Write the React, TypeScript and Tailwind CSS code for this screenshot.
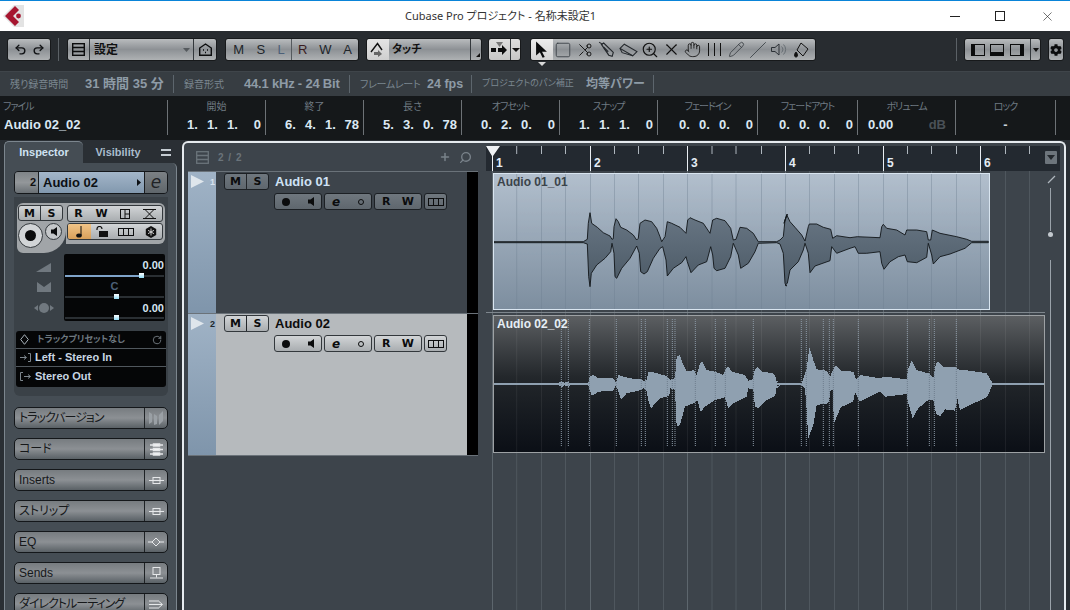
import type { ReactNode } from 'react';
import {
  Hand, Pencil, RotateCcw, Scissors, Search, Slash, Square, Undo2, Redo2, X, ZoomIn, Plus,
} from 'lucide-react';
import { FaCog } from 'react-icons/fa';

const FONT = "font-['Liberation_Sans','Noto_Sans_CJK_JP',sans-serif] [font-feature-settings:'palt']";
const BTN = 'bg-gradient-to-b from-[#b9bcbe] via-[#8d9195] to-[#aeb1b3] border border-[#17191b] rounded-[3px]';
const SMALL = 'bg-gradient-to-b from-[#6f777e] to-[#5f676e] border border-[#1c2024] rounded-[3px]';
const SMALL_LIGHT = 'bg-gradient-to-b from-[#d2d5d7] to-[#a9adb0] border border-[#33383c] rounded-[3px]';

type Pt = [number, number];

// traced envelopes of the two clips, in zoomed crop coordinates
const w1Top: Pt[] = [[12,305],[280,305],[292,298],[295,250],[300,218],[305,250],[322,262],[340,278],[360,288],[366,298],[370,296],[372,260],[378,236],[385,245],[392,262],[410,270],[430,285],[440,300],[445,295],[450,250],[465,240],[485,245],[500,265],[510,290],[515,305],[525,290],[532,245],[545,250],[570,262],[588,280],[593,240],[600,233],[615,240],[640,250],[660,280],[668,240],[680,235],[705,242],[722,265],[730,300],[738,298],[750,262],[770,265],[790,280],[805,305],[860,305],[870,300],[880,290],[885,240],[892,222]];
const w1Bot: Pt[] = [[12,308],[280,308],[292,312],[296,410],[300,440],[304,400],[320,375],[345,355],[362,335],[366,310],[372,340],[375,410],[380,415],[395,385],[420,355],[440,318],[448,340],[452,395],[462,402],[472,395],[490,355],[510,325],[518,320],[528,360],[532,408],[550,385],[575,368],[588,350],[592,365],[603,398],[625,375],[650,365],[662,320],[668,345],[672,385],[680,392],[705,385],[722,350],[730,310],[745,345],[752,385],[775,370],[795,335],[805,310],[860,308],[870,312],[880,340],[885,430],[890,438]];
const w1Top2: Pt[] = [[42,250],[50,224],[60,245],[75,262],[95,285],[105,303],[115,260],[118,252],[140,252],[160,262],[182,268],[188,295],[200,287],[240,293],[262,290],[330,293],[335,260],[340,253],[350,265],[380,270],[405,285],[410,270],[440,270],[470,275],[475,300],[482,300],[487,270],[510,280],[560,290],[590,298],[605,304],[655,304]];
const w1Bot2: Pt[] = [[45,435],[52,430],[60,390],[85,365],[100,330],[105,310],[115,340],[120,398],[135,378],[180,362],[185,320],[200,340],[240,325],[255,320],[265,340],[290,340],[330,335],[335,370],[342,388],[360,365],[385,350],[405,345],[412,365],[440,368],[470,352],[475,310],[485,345],[490,372],[510,350],[540,342],[585,325],[605,308],[655,308]];

const w2Top: Pt[] = [[12,220],[205,219],[215,214],[222,218],[235,216],[242,220],[295,219],[300,200],[310,195],[325,205],[370,205],[378,218],[385,195],[395,198],[420,205],[455,208],[460,213],[470,210],[475,185],[490,187],[530,198],[540,210],[555,205],[560,140],[570,135],[580,165],[590,185],[612,180],[620,195],[630,160],[637,156],[650,180],[675,185],[700,195],[708,175],[715,170],[725,185],[765,195],[775,212],[788,208],[795,178],[803,172],[815,185],[850,190],[860,215],[870,219]];
const w2Bot: Pt[] = [[12,224],[205,225],[215,232],[222,226],[235,230],[242,225],[295,226],[305,258],[325,245],[370,242],[378,226],[385,245],[393,268],[410,250],[455,240],[460,232],[470,245],[475,270],[483,296],[495,280],[510,265],[538,258],[540,235],[555,240],[560,350],[570,345],[585,290],[615,278],[622,270],[632,305],[645,290],[675,270],[705,262],[715,295],[730,280],[770,260],[775,235],[790,238],[795,290],[805,295],[830,270],[855,258],[860,230],[870,225]];
const w2Top2: Pt[] = [[0,190],[15,195],[22,219],[95,219],[100,205],[110,178],[118,112],[130,150],[140,178],[170,182],[180,200],[190,178],[198,165],[212,182],[250,185],[258,208],[270,195],[330,205],[345,200],[410,208],[415,175],[425,152],[440,180],[475,190],[490,205],[498,160],[505,155],[520,172],[555,170],[562,178],[600,182],[650,190],[668,220],[690,220],[825,220]];
const w2Bot2: Pt[] = [[0,262],[15,258],[22,225],[95,225],[105,235],[110,300],[115,385],[130,345],[140,285],[175,280],[182,240],[188,240],[192,340],[212,292],[250,275],[255,245],[270,275],[330,245],[345,260],[410,252],[415,280],[428,325],[445,295],[475,270],[490,270],[498,310],[510,320],[525,298],[555,302],[562,265],[570,300],[600,285],[650,262],[668,225],[690,224],[825,224]];

const toAbs = (pts: Pt[], ox: number, oy: number) => pts.map(([x, y]) => [ox + x / 3, oy + y / 3] as Pt);
const toPath = (top: Pt[], bot: Pt[]) =>
  'M' + [...top, ...[...bot].reverse()].map(([x, y]) => `${x.toFixed(1)} ${y.toFixed(1)}`).join('L') + 'Z';

const wave1 = toPath(
  [...toAbs(w1Top, 490, 140), ...toAbs(w1Top2, 770, 140)],
  [...toAbs(w1Bot, 490, 140), ...toAbs(w1Bot2, 770, 140)],
);
const wave2 = toPath(
  [...toAbs(w2Top, 490, 310), ...toAbs(w2Top2, 770, 310)],
  [...toAbs(w2Bot, 490, 310), ...toAbs(w2Bot2, 770, 310)],
);

const hitpoints = [
  ...[214, 235, 298, 379, 454, 466, 532, 547, 555, 616, 676, 706, 790].map((x) => 490 + x / 3),
  ...[94, 109, 160, 178, 190, 265, 412, 478, 493, 559].map((x) => 770 + x / 3),
];

const barLines = [492, 590, 687, 785, 883, 980];
const beatLines = [516.7, 541.5, 565.5, 614.5, 638.5, 663.5, 712, 736, 761.5, 809.5, 834.5, 858.5, 907.5, 931.5, 956.5, 1005.5, 1029.5];

function GridLines({ bar, beat, opacity = 1 }: { bar: string; beat: string; opacity?: number }) {
  return (
    <g opacity={opacity}>
      {beatLines.map((x) => <line key={x} x1={x} x2={x} y1="0" y2="620" stroke={beat} />)}
      {barLines.map((x) => <line key={x} x1={x + 0.5} x2={x + 0.5} y1="0" y2="620" stroke={bar} />)}
    </g>
  );
}

function InfoCol({ label, w, left, children }: { label: string; w: string; left?: boolean; children: ReactNode }) {
  // katakana labels sit tighter than the kanji ones
  const kana = /^[\u30A0-\u30FF]/.test(label);
  return (
    <div className={`${w} h-[35px] border-r border-[#6d7276] flex flex-col shrink-0`}>
      <div className={`h-[16px] text-[10px] leading-[14px] text-[#6f7a82] ${kana ? 'tracking-[-1px]' : ''} ${left ? 'pl-[3px]' : 'text-center'}`}>{label}</div>
      {children}
    </div>
  );
}

function TimeVal({ v }: { v: [string, string, string, string] }) {
  return (
    <div className="flex justify-end pr-[4px] text-[13px] font-bold leading-[20px] text-[#dbe8f3] whitespace-nowrap">
      <span className="w-[20px]">{v[0]}.</span>
      <span className="w-[20px]">{v[1]}.</span>
      <span className="w-[20px]">{v[2]}.</span>
      <span className="w-[14px] flex justify-end">{v[3]}</span>
    </div>
  );
}

function StatusSep() {
  return <div className="w-px h-[18px] bg-[#5d666d] shrink-0" />;
}

function SectionBtn({ label, icon, tight }: { label: string; icon: ReactNode; tight?: boolean }) {
  return (
    <div className="h-[22px] w-[154px] mb-[9px] flex shrink-0 rounded-[5px] border border-[#14171a] bg-gradient-to-b from-[#777c80] via-[#8c9094] to-[#5a6166]">
      <div className={`flex-1 pl-[4px] text-[12px] leading-[20px] text-[#16181a] whitespace-nowrap ${tight ? 'tracking-[-1px]' : ''}`}>{label}</div>
      <div className="w-[23px] border-l border-[#1e2225] flex items-center justify-center text-[#e6e8ea]">{icon}</div>
    </div>
  );
}

function ToolIcon({ active, children }: { active?: boolean; children: ReactNode }) {
  return (
    <div className={`w-[21.6px] h-full flex items-center justify-center shrink-0 ${active ? 'bg-gradient-to-b from-[#ececec] to-[#d2d2d2] rounded-l-[3px]' : ''}`}>
      {children}
    </div>
  );
}

function Letter({ t, className = 'text-[11px]' }: { t: string; className?: string }) {
  return <span className={`font-bold font-['DejaVu_Sans',sans-serif] ${className} text-[#0b0c0d] leading-none`}>{t}</span>;
}

function LaneIcon() {
  return (
    <svg width="16" height="8" viewBox="0 0 16 8" fill="none" stroke="#0d0e0f" strokeWidth="1">
      <rect x=".5" y=".5" width="15" height="7" /><path d="M5.5 0v8M10.5 0v8" />
    </svg>
  );
}

function TrackRow({ n, name, selected }: { n: string; name: string; selected?: boolean }) {
  const sk = selected ? SMALL_LIGHT : SMALL;
  return (
    <div className="h-[142px] flex border-t border-[#6a7279] shrink-0">
      <div className="w-[28px] bg-gradient-to-b from-[#a0b3c6] to-[#7f95ab] flex items-start pt-[3px] pl-[3px] gap-[6px]">
        <svg width="13" height="13" viewBox="0 0 13 13" className="shrink-0"><path d="M0 0L13 6.5L0 13Z" fill="#dfe6ec" /></svg>
        <span className={`text-[9px] font-bold leading-[14px] ${selected ? 'text-[#22272b]' : 'text-[#d8e3ee]'}`}>{n}</span>
      </div>
      <div className={`w-[251px] pl-[8px] pt-[1px] ${selected ? 'bg-[#b6babd]' : 'bg-[#3d444b]'}`}>
        <div className="flex items-center">
          <div className={`flex w-[45px] h-[17px] ${sk}`}>
            <div className="flex-1 flex items-center justify-center border-r border-[#22262a]"><Letter t="M" /></div>
            <div className="flex-1 flex items-center justify-center"><Letter t="S" /></div>
          </div>
          <span className={`ml-[6px] text-[13px] font-bold leading-[17px] ${selected ? 'text-[#0c0c0c]' : 'text-[#cfe2f5]'}`}>{name}</span>
        </div>
        <div className="flex ml-[50px] mt-[3px] gap-[2px]">
          <div className={`w-[48px] h-[17px] flex items-center justify-between px-[7px] ${sk}`}>
            <span className="w-[8px] h-[8px] rounded-full bg-[#0b0c0d]" />
            <svg width="6" height="9" viewBox="0 0 6 9"><path d="M6 0V9L2.5 6.5H0V2.5H2.5Z" fill="#0b0c0d" /></svg>
          </div>
          <div className={`w-[48px] h-[17px] flex items-center justify-between px-[7px] ${sk}`}>
            <Letter t="e" className="text-[12px] italic" />
            <span className="w-[6px] h-[6px] rounded-full border border-[#0b0c0d]" />
          </div>
          <div className={`w-[48px] h-[17px] flex items-center justify-between px-[7px] ${sk}`}>
            <Letter t="R" /><Letter t="W" />
          </div>
          <div className={`w-[23px] h-[17px] flex items-center justify-center ${sk}`}><LaneIcon /></div>
        </div>
      </div>
      <div className="w-[11px] bg-black" />
    </div>
  );
}

export default function App() {
  return (
    <div className={`w-[1070px] h-[610px] overflow-hidden flex flex-col bg-[#2d3338] ${FONT}`}>
      {/* window title */}
      <div className="h-[31px] shrink-0 bg-white border-t border-[#0a84d8] flex items-center">
        <div className="w-[29px] pl-[3px] shrink-0">
          <svg width="21" height="22" viewBox="0 0 21 22">
            <path d="M11 0H21V22H11L0 11Z" fill="#e3e3e3" />
            <path d="M12 1L2 11L12 21L16 17L10 11L16 5Z" fill="#a6152f" />
            <circle cx="15.5" cy="11" r="2.4" fill="#a6152f" />
          </svg>
        </div>
        <div className="ml-[376px] text-[11px] text-[#333] font-['Noto_Sans','Noto_Sans_CJK_JP',sans-serif] whitespace-nowrap">Cubase Pro プロジェクト - 名称未設定1</div>
        <div className="ml-auto flex items-center mr-[15px] gap-[35px]">
          <div className="w-[10px] h-px bg-[#222]" />
          <div className="w-[10px] h-[10px] border border-[#222]" />
          <X size={15} strokeWidth={1} className="text-[#222]" />
        </div>
      </div>

      {/* toolbar */}
      <div className="h-[41px] shrink-0 bg-[#282c30] border-b border-[#3f454a] flex items-center pl-[7px] pb-[3px]">
        <div className={`w-[44px] h-[23px] ${BTN} flex items-center justify-center gap-[5px] text-[#101214]`}>
          <Undo2 size={13} strokeWidth={2.5} /><Redo2 size={13} strokeWidth={2.5} />
        </div>
        <div className="w-px h-[23px] bg-[#5b6166] ml-[7px] mr-[8px]" />
        <div className={`w-[150px] h-[23px] ${BTN} flex items-center`}>
          <div className="w-[22px] h-full flex items-center justify-center border-r border-[#33383c]">
            <svg width="13" height="13" viewBox="0 0 13 13" fill="none" stroke="#0b0c0d" strokeWidth="1.4"><rect x=".7" y=".7" width="11.6" height="11.6" /><path d="M1 4.5h11M1 8.5h11" /></svg>
          </div>
          <span className="ml-[4px] text-[12px] font-bold text-[#111] flex-1">設定</span>
          <svg width="7" height="4" viewBox="0 0 7 4" className="mr-[3px]"><path d="M0 0H7L3.5 4Z" fill="#555a5e" /></svg>
          <div className="w-[23px] h-full border-l border-[#33383c] flex items-center justify-center">
            <svg width="13" height="13" viewBox="0 0 13 13" fill="none" stroke="#0b0c0d" strokeWidth="1.4"><path d="M.7 12.3V5L6.5 1L12.3 5V12.3Z" /><path d="M4 7h1M8 7h1M6 9.5h1" /></svg>
          </div>
        </div>
        <div className={`ml-[8px] w-[134px] h-[23px] ${BTN} flex items-center text-[13px] text-[#20252a]`}>
          <div className="w-[66px] h-full flex items-center justify-around border-r border-[#555a5e] pl-[1px]">
            <span>M</span><span>S</span><span className="text-[#4c6078]">L</span>
          </div>
          <div className="flex-1 flex items-center justify-around">
            <span className="text-[#3a1c22]">R</span><span>W</span><span>A</span>
          </div>
        </div>
        <div className={`ml-[7px] w-[116px] h-[23px] ${BTN} flex items-center`}>
          <div className="w-[22px] h-full bg-gradient-to-b from-[#e4e4e4] to-[#cfcfcf] rounded-l-[3px] flex items-center justify-center">
            <svg width="16" height="15" viewBox="0 0 16 15" fill="none"><path d="M1 10L7.5 1.5L12 8" stroke="#111" strokeWidth="1.4" /><path d="M8 8L12 12L8 15V13H4V10H8Z" fill="#666" /></svg>
          </div>
          <span className="ml-[3px] text-[11px] font-bold text-[#111] flex-1">タッチ</span>
          <div className="w-[11px] h-full border-l border-[#33383c] relative">
            <span className="absolute right-[1px] bottom-[3px] w-0 h-0 border-l-[4px] border-l-transparent border-b-[4px] border-b-[#111]" />
          </div>
        </div>
        <div className="ml-[6px] w-[33px] h-[23px] flex rounded-[3px] border border-[#17191b] bg-gradient-to-b from-[#dedede] to-[#c6c6c6]">
          <div className="w-[22px] flex items-center justify-center border-r border-[#33383c]">
            <svg width="17" height="15" viewBox="0 0 17 15"><path d="M0 6h5v4H0ZM7 6h4V3l5 5-5 5v-3H7Z" fill="#0b0c0d" /><path d="M5 0h7L8.500 5Z" fill="#777" /></svg>
          </div>
          <div className="flex-1 flex items-center justify-center">
            <span className="w-0 h-0 border-x-[4px] border-x-transparent border-t-[4px] border-t-[#111]" />
          </div>
        </div>
        <div className={`ml-[9px] w-[286px] h-[23px] ${BTN} flex items-center relative text-[#20252a]`}>
          <ToolIcon active>
            <svg width="13" height="17" viewBox="0 0 12 15"><path d="M1 0L11 9.500H6.500L9 14.500L7 15L4.500 10L1 13Z" fill="#0b0c0d" /></svg>
          </ToolIcon>
          <ToolIcon><Square size={18} strokeWidth={1.2} className="text-[#3c4247]" /></ToolIcon>
          <ToolIcon><Scissors size={16} strokeWidth={1.4} className="text-[#111] -scale-x-100" /></ToolIcon>
          <ToolIcon>
            <svg width="17" height="17" viewBox="0 0 15 15" fill="none" stroke="#24282c" strokeWidth="1"><path d="M1 1L4 3" /><path d="M3 3L5 1.800L13.500 10L12.500 13.500L9.500 12.500Z" /><path d="M5 5.500L9 9.500" /></svg>
          </ToolIcon>
          <ToolIcon>
            <svg width="19" height="14" viewBox="0 0 18 13" fill="none" stroke="#24282c" strokeWidth="1"><path d="M1 5L5 1L17 8L13 12Z" /><path d="M1 5L3 9L13 12" /></svg>
          </ToolIcon>
          <ToolIcon><ZoomIn size={18} strokeWidth={1.5} className="text-[#111]" /></ToolIcon>
          <ToolIcon><X size={19} strokeWidth={1.4} className="text-[#111]" /></ToolIcon>
          <ToolIcon><Hand size={17} strokeWidth={1.2} className="text-[#111]" /></ToolIcon>
          <ToolIcon>
            <svg width="15" height="13" viewBox="0 0 15 13" stroke="#111" strokeWidth="1"><path d="M1.500 0v13M7.500 0v13M13.500 0v13" /></svg>
          </ToolIcon>
          <ToolIcon><Pencil size={17} strokeWidth={1.1} className="text-[#30353a]" /></ToolIcon>
          <ToolIcon><Slash size={18} strokeWidth={1.2} className="text-[#40464b]" /></ToolIcon>
          <ToolIcon>
            <svg width="16" height="13" viewBox="0 0 16 13" fill="none" stroke="#2c3136"><path d="M.5 4.500H4L8 1V12L4 8.500H.5Z" /><path d="M10.500 3.500a4 4 0 0 1 0 6M12.500 1.500a7 7 0 0 1 0 10" stroke="#666d73" /></svg>
          </ToolIcon>
          <ToolIcon>
            <svg width="16" height="16" viewBox="0 0 16 16" fill="none" stroke="#111"><path d="M8 1L15 7L10 14L4 8Z" /><path d="M3 10C1 12 1 15 3 15S5 12 3 10Z" fill="#111" /></svg>
          </ToolIcon>
          <span className="absolute left-[7px] -bottom-[6px] w-0 h-0 border-x-[4px] border-x-transparent border-t-[4px] border-t-[#d8d8d8]" />
        </div>
        <div className="w-px h-[23px] bg-[#5b6166] ml-[140px]" />
        <div className={`ml-[7px] w-[77px] h-[23px] ${BTN} flex items-center`}>
          <div className="w-[66px] flex items-center justify-around border-r border-[#33383c] h-full px-[3px]">
            <div className="w-[14px] h-[12px] border border-[#0b0c0d] flex"><span className="w-[3px] bg-[#0b0c0d]" /></div>
            <div className="w-[14px] h-[12px] border border-[#0b0c0d] flex items-end"><span className="w-full h-[3px] bg-[#0b0c0d]" /></div>
            <div className="w-[14px] h-[12px] border border-[#0b0c0d] flex justify-end"><span className="w-[3px] bg-[#0b0c0d]" /></div>
          </div>
          <div className="flex-1 flex items-center justify-center">
            <span className="w-0 h-0 border-x-[3.5px] border-x-transparent border-t-[4px] border-t-[#111]" />
          </div>
        </div>
        <div className={`ml-[7px] w-[16px] h-[23px] ${BTN} flex items-center justify-center`}>
          <FaCog size={12} className="text-[#0b0c0d]" />
        </div>
      </div>

      {/* status line */}
      <div className="h-[24px] shrink-0 bg-[#373d42] flex items-center pl-[10px] whitespace-nowrap text-[#7b8790]">
        <span className="w-[75px] text-[10px]">残り録音時間</span>
        <span className="w-[88px] text-[13px] font-bold text-[#8e9ba6]">31 時間 35 分</span>
        <StatusSep />
        <span className="ml-[10px] w-[60px] text-[10px]">録音形式</span>
        <span className="w-[105px] text-[13px] font-bold text-[#8e9ba6] tracking-[-0.2px]">44.1 kHz - 24 Bit</span>
        <StatusSep />
        <span className="ml-[10px] w-[67px] text-[10px] tracking-[-0.3px]">フレームレート</span>
        <span className="w-[44px] text-[12.5px] font-bold text-[#8e9ba6]">24 fps</span>
        <StatusSep />
        <span className="ml-[10px] w-[104px] text-[9px]">プロジェクトのパン補正</span>
        <span className="w-[67px] text-[12px] font-bold text-[#8e9ba6]">均等パワー</span>
        <StatusSep />
      </div>

      {/* info line */}
      <div className="h-[44px] shrink-0 bg-[#15181a] flex items-start pt-[4px]">
        <InfoCol label="ファイル" left w="w-[168px]">
          <div className="pl-[4px] text-[13px] font-bold leading-[20px] text-[#dbe8f3]">Audio 02_02</div>
        </InfoCol>
        <InfoCol label="開始" w="w-[98px]"><TimeVal v={['1', '1', '1', '0']} /></InfoCol>
        <InfoCol label="終了" w="w-[98px]"><TimeVal v={['6', '4', '1', '78']} /></InfoCol>
        <InfoCol label="長さ" w="w-[98px]"><TimeVal v={['5', '3', '0', '78']} /></InfoCol>
        <InfoCol label="オフセット" w="w-[98px]"><TimeVal v={['0', '2', '0', '0']} /></InfoCol>
        <InfoCol label="スナップ" w="w-[98px]"><TimeVal v={['1', '1', '1', '0']} /></InfoCol>
        <InfoCol label="フェードイン" w="w-[100px]"><TimeVal v={['0', '0', '0', '0']} /></InfoCol>
        <InfoCol label="フェードアウト" w="w-[100px]"><TimeVal v={['0', '0', '0', '0']} /></InfoCol>
        <InfoCol label="ボリューム" w="w-[98px]">
          <div className="flex justify-between pl-[10px] pr-[9px] text-[13px] font-bold leading-[20px]">
            <span className="text-[#dbe8f3]">0.00</span><span className="text-[#4a5157]">dB</span>
          </div>
        </InfoCol>
        <InfoCol label="ロック" w="w-[100px]">
          <div className="text-center text-[13px] font-bold leading-[20px] text-[#c8d2da]">-</div>
        </InfoCol>
      </div>

      {/* main */}
      <div className="flex-1 flex min-h-0 bg-[#2a2f34]">
        {/* inspector */}
        <div className="w-[182px] shrink-0 pl-[4px] pt-[1px] flex flex-col">
          <div className="h-[22px] flex items-center shrink-0">
            <div className="w-[79px] h-full bg-[#454d54] border-t border-l border-[#7c868e] rounded-t-[5px] text-center text-[11px] font-bold leading-[21px] text-[#cfe2f2]">Inspector</div>
            <div className="w-[70px] text-center text-[11px] font-bold text-[#a9bccc]">Visibility</div>
            <div className="ml-[8px] w-[10px] h-[7px] border-y-2 border-[#c5ccd2]" />
          </div>
          <div className="w-[173px] flex-1 bg-[#454d54] border-x border-[#7c868e] rounded-tr-[5px] pt-[8px] pl-[9px] flex flex-col">
            <div className="w-[154px] h-[23px] flex shrink-0 rounded-[4px] border border-[#14171a] overflow-hidden">
              <div className="w-[23px] bg-gradient-to-b from-[#7f8488] via-[#93979a] to-[#6a7075] text-right pr-[2px] text-[11px] font-bold leading-[21px] text-[#111]">2</div>
              <div className="flex-1 bg-gradient-to-b from-[#a3b6c9] to-[#8298ae] border-x border-[#1a1d20] flex items-center pl-[4px] text-[13px] font-bold text-[#0c1014]">
                Audio 02
                <svg width="4" height="7" viewBox="0 0 4 7" className="ml-auto mr-[3px]"><path d="M0 0L4 3.500L0 7Z" fill="#0c1014" /></svg>
              </div>
              <div className="w-[22px] bg-gradient-to-b from-[#7c8185] to-[#5f666b] flex items-center justify-center text-[17px] italic text-[#1f2326] font-['DejaVu_Sans',sans-serif]">e</div>
            </div>
            <div className="w-[154px] h-[199px] mt-[3px] bg-[#3a4147] rounded-b-[6px] flex flex-col items-center pt-[6px] shrink-0">
              <div className="flex items-start w-[148px]">
                <div className="w-[49px] h-[50px] bg-[#a1a5a8] rounded-l-[6px] rounded-br-[22px] pl-[1px] pt-[2px] flex flex-col gap-[2px]">
                  <div className={`flex w-[45px] h-[16px] ${SMALL_LIGHT}`}>
                    <div className="flex-1 flex items-center justify-center border-r border-[#33383c]"><Letter t="M" /></div>
                    <div className="flex-1 flex items-center justify-center"><Letter t="S" /></div>
                  </div>
                  <div className="flex items-start gap-[2px]">
                    <div className="w-[25px] h-[25px] rounded-full bg-[#d2d5d7] border border-[#33383c] flex items-center justify-center shrink-0">
                      <span className="w-[11px] h-[11px] rounded-full bg-[#0b0c0d]" />
                    </div>
                    <div className="w-[17px] h-[17px] rounded-full bg-[#c4c7c9] border border-[#33383c] flex items-center justify-center shrink-0">
                      <svg width="6" height="9" viewBox="0 0 6 9"><path d="M6 0V9L2.500 6.500H0V2.500H2.500Z" fill="#0b0c0d" /></svg>
                    </div>
                  </div>
                </div>
                <div className="w-[99px] h-[41px] bg-[#a1a5a8] rounded-r-[6px] pt-[2px] pl-[1px] flex flex-col gap-[1px]">
                  <div className={`w-[96px] h-[17px] flex items-center justify-around ${SMALL_LIGHT}`}>
                    <Letter t="R" /><Letter t="W" />
                    <svg width="10" height="10" viewBox="0 0 10 10" fill="none" stroke="#111"><rect x=".5" y=".5" width="9" height="9" /><path d="M5 0v10M5 5h5" /></svg>
                    <svg width="13" height="10" viewBox="0 0 13 10" fill="none" stroke="#111"><path d="M0 .5h13M0 9.500h13M2 .5L11 9.500M11 .5L2 9.500" /></svg>
                  </div>
                  <div className={`w-[96px] h-[17px] flex ${SMALL_LIGHT}`}>
                    <div className="w-[23px] h-full bg-gradient-to-b from-[#f0c487] to-[#d9a05a] rounded-l-[2px] flex items-center justify-center">
                      <svg width="7" height="12" viewBox="0 0 7 12"><path d="M5 0V9" stroke="#111" /><ellipse cx="3" cy="9.500" rx="2.800" ry="2" fill="#111" /></svg>
                    </div>
                    <div className="flex-1 flex items-center justify-around">
                      <svg width="12" height="11" viewBox="0 0 12 11" fill="none"><path d="M1 4V3a2.500 2.500 0 0 1 5 0" stroke="#111" strokeWidth="1.200" /><rect x="3" y="5" width="9" height="6" fill="#111" /></svg>
                      <LaneIcon />
                      <svg width="12" height="12" viewBox="0 0 12 12"><path d="M6 0L11.200 3V9L6 12L.8 9V3Z" fill="#111" /><path d="M6 2.500V9.500M3 4.300L9 7.700M9 4.300L3 7.700" stroke="#ddd" strokeWidth=".9" /></svg>
                    </div>
                  </div>
                </div>
              </div>
              <div className="w-[148px] flex mt-[1px]">
                <div className="w-[47px] flex flex-col items-center pl-[6px] pt-[5px] shrink-0">
                  <svg width="15" height="13" viewBox="0 0 15 13"><path d="M0 13L15 4V13Z" fill="#70787f" /></svg>
                  <svg width="14" height="11" viewBox="0 0 14 11" className="mt-[9px]"><path d="M0 1L7 6L14 1V11H0Z" fill="#70787f" /></svg>
                  <div className="flex items-center gap-[1px] mt-[11px]">
                    <span className="w-0 h-0 border-y-[3.500px] border-y-transparent border-r-[4px] border-r-[#70787f]" />
                    <span className="w-[10px] h-[10px] rounded-full bg-[#70787f]" />
                    <span className="w-0 h-0 border-y-[3.500px] border-y-transparent border-l-[4px] border-l-[#70787f]" />
                  </div>
                </div>
                <div className="w-[101px] h-[67px] bg-[#050607] rounded-[2px] px-[1px] pt-[4px] text-[11px] font-bold leading-[14px] text-[#d6e5f2]">
                  <div className="text-right">0.00</div>
                  <div className="h-[2px] mt-[3px] bg-[#2a2f33] relative">
                    <div className="h-full w-[76px] bg-[#7fa3c9]" />
                    <span className="absolute left-[74px] -top-[2px] w-[5px] h-[5px] bg-gradient-to-b from-white to-[#8fdcf5]" />
                  </div>
                  <div className="text-center text-[#4c6078] mt-[2px]">C</div>
                  <div className="h-[2px] mt-[3px] bg-[#2a2f33] relative">
                    <span className="absolute left-[49px] -top-[2px] w-[5px] h-[5px] bg-gradient-to-b from-white to-[#8fdcf5]" />
                  </div>
                  <div className="text-right mt-[3px]">0.00</div>
                  <div className="h-[2px] mt-[2px] bg-[#2a2f33] relative">
                    <span className="absolute left-[49px] -top-[2px] w-[5px] h-[5px] bg-gradient-to-b from-white to-[#8fdcf5]" />
                  </div>
                </div>
              </div>
              <div className="w-[150px] h-[56px] mt-[10px] bg-[#050607] rounded-[3px] text-[11px] font-bold text-[#c8d6e2] flex flex-col shrink-0">
                <div className="h-[18px] flex items-center px-[4px] border-b border-[#50575d] text-[#6d7880]">
                  <svg width="9" height="11" viewBox="0 0 9 11" fill="none" stroke="#a8b2ba"><path d="M4.500 .7L8.300 5.500L4.500 10.300L.7 5.500Z" /></svg>
                  <span className="ml-[8px] text-[9px] flex-1">トラックプリセットなし</span>
                  <RotateCcw size={10} className="text-[#7d868d] -scale-x-100" />
                </div>
                <div className="h-[18px] flex items-center px-[4px] border-b border-[#50575d]">
                  <svg width="11" height="9" viewBox="0 0 11 9" fill="none" stroke="#7d868d"><path d="M0 4.500H6M4 2.500L6.500 4.500L4 6.500M8 .5H10.500V8.500H8" /></svg>
                  <span className="ml-[4px]">Left - Stereo In</span>
                </div>
                <div className="h-[18px] flex items-center px-[4px]">
                  <svg width="11" height="9" viewBox="0 0 11 9" fill="none" stroke="#7d868d"><path d="M3 .5H.5V8.500H3M4 4.500H10M8 2.500L10.500 4.500L8 6.500" /></svg>
                  <span className="ml-[4px]">Stereo Out</span>
                </div>
              </div>
            </div>
            <div className="mt-[11px] flex flex-col">
              <SectionBtn tight label="トラックバージョン" icon={<svg width="14" height="14" viewBox="0 0 14 14" fill="#9aa0a5"><path d="M0 1L3 3V11L0 13ZM5 3L8 5V13L5 14ZM14 0V10L10 14V4Z" /></svg>} />
              <SectionBtn label="コード" icon={<svg width="13" height="13" viewBox="0 0 13 13" stroke="currentColor" strokeWidth="1.500"><path d="M0 2h13M0 6.500h13M0 11h13" /><rect x="3.500" y="1" width="6" height="2" fill="white" /><rect x="3.500" y="5.500" width="6" height="2" fill="white" /><rect x="3.500" y="10" width="6" height="2" fill="white" /></svg>} />
              <SectionBtn label="Inserts" icon={<svg width="15" height="9" viewBox="0 0 15 9" fill="none" stroke="currentColor"><path d="M0 4.500H15" /><rect x="4" y="1.500" width="7" height="6" /></svg>} />
              <SectionBtn label="ストリップ" icon={<svg width="15" height="9" viewBox="0 0 15 9" fill="none" stroke="currentColor"><path d="M0 4.500H15" /><rect x="4" y="1.500" width="7" height="6" /></svg>} />
              <SectionBtn label="EQ" icon={<svg width="16" height="10" viewBox="0 0 16 10" fill="none" stroke="currentColor"><path d="M0 5H4L8 1L12 5H16M4 5L8 9L12 5" /></svg>} />
              <SectionBtn label="Sends" icon={<svg width="13" height="12" viewBox="0 0 13 12" fill="none" stroke="currentColor"><rect x="3" y=".5" width="7" height="7" /><path d="M6.500 7.500V10.500M0 11H13" /></svg>} />
              <SectionBtn tight label="ダイレクトルーティング" icon={<svg width="14" height="9" viewBox="0 0 14 9" fill="none" stroke="currentColor"><path d="M0 1H10M0 4.500H13M0 8H10M10 1.500L13.500 4.500L10 7.500" /></svg>} />
            </div>
          </div>
        </div>

        {/* project area */}
        <div className="w-[884px] h-[480px] mt-[1px] shrink-0 border-x-2 border-t-2 border-[#e6ebef] rounded-t-[6px] bg-[#3d444b] flex pl-[4px] overflow-hidden">
          {/* track list */}
          <div className="w-[290px] shrink-0 flex flex-col">
            <div className="h-[28px] flex items-center pl-[8px] pr-[6px] shrink-0">
              <svg width="13" height="13" viewBox="0 0 13 13" fill="none" stroke="#6b747b" strokeWidth="1.300"><rect x=".7" y=".7" width="11.600" height="11.600" /><path d="M1 4.500h11M1 8.500h11" /></svg>
              <span className="ml-[9px] text-[10px] font-bold text-[#6b747b] tracking-[1px]">2 / 2</span>
              <Plus size={12} strokeWidth={3} className="ml-auto text-[#79828a]" />
              <Search size={13} strokeWidth={2.500} className="ml-[8px] text-[#79828a] -scale-x-100" />
            </div>
            <TrackRow n="1" name="Audio 01" />
            <TrackRow n="2" name="Audio 02" selected />
            <div className="flex-1 border-t border-[#6a7279]" />
          </div>

          {/* event display */}
          <div className="ml-[8px] w-[579px] shrink-0 flex flex-col">
            <div className="h-[25px] mt-[3px] w-[574px] shrink-0 bg-[#232930] relative overflow-hidden">
              <svg width="574" height="25" viewBox="486 146 574 25" className="absolute inset-0">
                {beatLines.map((x) => <line key={x} x1={x} x2={x} y1="146" y2="154" stroke="#aeb6bd" />)}
                {barLines.map((x) => <line key={x} x1={x + 0.5} x2={x + 0.5} y1="146" y2="171" stroke="#e8edf2" />)}
                <path d="M486 146H500L493 156V171H492V156Z" fill="#eef1f4" />
              </svg>
              {['1', '2', '3', '4', '5', '6'].map((n, i) => (
                <span key={n} className="absolute top-[10px] text-[12px] font-bold leading-[14px] text-[#e4edf5]" style={{ left: barLines[i] - 486 + 4 }}>{n}</span>
              ))}
              <div className="absolute right-[3px] top-[5px] w-[12px] h-[13px] bg-[#6d757c] rounded-[1px] flex items-center justify-center">
                <span className="w-0 h-0 border-x-[4px] border-x-transparent border-t-[5px] border-t-[#23282d]" />
              </div>
            </div>
            <div className="flex-1 flex min-h-0">
              <div className="w-[559px] relative shrink-0">
                <svg width="559" height="440" viewBox="486 171 559 440" className="absolute inset-0"><GridLines bar="#5d666d" beat="#4f575e" /></svg>
                <div className="relative h-[142px] pt-[2px] pl-[7px] border-b border-[#7e868d]">
                  <div className="w-[497px] h-[137px] relative border border-[#d9e5f0] bg-gradient-to-b from-[#b2bfcd] to-[#7d8e9f] overflow-hidden">
                    <svg width="497" height="137" viewBox="493 173 497 137" className="absolute -left-px -top-px">
                      <defs>
                        <linearGradient id="w1" x1="0" y1="0" x2="0" y2="1"><stop offset="0" stopColor="#687684" /><stop offset="1" stopColor="#4b5965" /></linearGradient>
                      </defs>
                      <GridLines bar="#6f8092" beat="#6f8092" opacity={0.4} />
                      <path d={wave1} fill="url(#w1)" stroke="#111518" strokeWidth="0.9" />
                    </svg>
                    <span className="absolute left-[3px] top-[1px] text-[12px] font-bold leading-[14px] text-[#3b434a]">Audio 01_01</span>
                  </div>
                </div>
                <div className="relative h-[141px] pt-[2px] pl-[7px]">
                  <div className="w-[552px] h-[138px] relative border border-[#9da1a4] bg-gradient-to-b from-[#5c5f62] via-[#23272b] via-45% to-[#0b0f16] overflow-hidden">
                    <svg width="552" height="138" viewBox="493 315 552 138" className="absolute -left-px -top-px">
                      <GridLines bar="#ffffff" beat="#ffffff" opacity={0.06} />
                      {hitpoints.map((x) => <line key={x} x1={x} x2={x} y1="319" y2="447" stroke="#8b98a5" strokeDasharray="1 1" />)}
                      <path d={wave2} fill="#8fa0b0" shapeRendering="crispEdges" />
                      {hitpoints.map((x) => <line key={x} x1={x} x2={x} y1="319" y2="447" stroke="#6f7e8d" strokeDasharray="1 1" clipPath="url(#w2clip)" />)}
                      <clipPath id="w2clip"><path d={wave2} /></clipPath>
                    </svg>
                    <span className="absolute left-[3px] top-[1px] text-[12px] font-bold leading-[14px] text-[#e6eef5]">Audio 02_02</span>
                  </div>
                </div>
              </div>
              <div className="w-[20px] shrink-0 flex flex-col items-center pr-[9px] pt-[4px]">
                <svg width="9" height="9" viewBox="0 0 9 9" className="ml-[2px]"><path d="M1 8L8 1" stroke="#aeb6bd" strokeWidth="1.200" /></svg>
                <div className="w-px h-[43px] bg-[#9aa2a9] mt-[4px]" />
                <span className="w-[5px] h-[5px] rounded-full bg-[#c3c9ce] my-[1px]" />
                <div className="w-px flex-1 mt-[22px] bg-[#9aa2a9]" />
              </div>
            </div>
          </div>
        </div>
      </div>
    </div>
  );
}
